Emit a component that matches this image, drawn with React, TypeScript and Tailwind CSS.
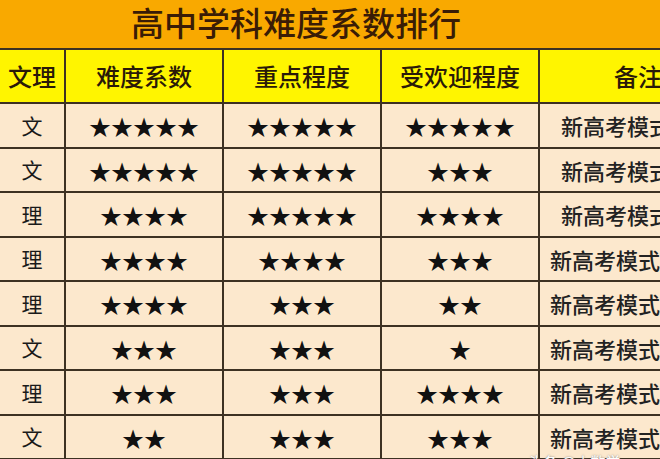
const LINE = "border-[#3d3122]";

type Row = { kind: string; hard: number; key: number; fav: number; note: string };

const ROWS: Row[] = [
  { kind: "文", hard: 5, key: 5, fav: 5, note: "新高考模式必考" },
  { kind: "文", hard: 5, key: 5, fav: 3, note: "新高考模式必考" },
  { kind: "理", hard: 4, key: 5, fav: 4, note: "新高考模式必考" },
  { kind: "理", hard: 4, key: 4, fav: 3, note: "新高考模式六选三" },
  { kind: "理", hard: 4, key: 3, fav: 2, note: "新高考模式六选三" },
  { kind: "文", hard: 3, key: 3, fav: 1, note: "新高考模式六选三" },
  { kind: "理", hard: 3, key: 3, fav: 4, note: "新高考模式六选三" },
  { kind: "文", hard: 2, key: 3, fav: 3, note: "新高考模式六选三" },
];

const HEADERS = ["文理", "难度系数", "重点程度", "受欢迎程度", "备注"];

function Stars({ n }: { n: number }) {
  return <span className="text-[22px] leading-none text-[#111]">{"★".repeat(n)}</span>;
}

function Cell({ children, head }: { children: React.ReactNode; head?: boolean }) {
  return (
    <div
      className={`flex items-center justify-center whitespace-nowrap border-r-2 border-b-2 ${LINE} ${
        head ? "h-[54px] bg-[#fff500]" : "h-[44.5px]"
      }`}
    >
      {children}
    </div>
  );
}

export default function App() {
  return (
    <div className="relative h-[459px] w-[660px] overflow-hidden bg-[#fce8cd] font-['Noto_Sans_CJK_SC','Noto_Sans',sans-serif]">
      <div className={`h-[50px] border-b-2 ${LINE} bg-[#f9a900] pl-[131px] pt-[4px]`}>
        <h1 className="whitespace-nowrap text-[33px] font-medium leading-[1.1] text-[#3a1c06]">
          高中学科难度系数排行
        </h1>
      </div>

      <div className="grid w-[738px] grid-cols-[66px_158px_158px_158px_198px]">
        {HEADERS.map((h) => (
          <Cell key={h} head>
            <span className="text-[24px] font-medium leading-none text-[#2a1a08]">{h}</span>
          </Cell>
        ))}
        {ROWS.map((r, i) => (
          <div key={i} className="contents">
            <Cell>
              <span className="text-[21px] leading-none text-[#1a1a1a]">{r.kind}</span>
            </Cell>
            <Cell>
              <Stars n={r.hard} />
            </Cell>
            <Cell>
              <Stars n={r.key} />
            </Cell>
            <Cell>
              <Stars n={r.fav} />
            </Cell>
            <Cell>
              <span className="text-[22px] font-medium leading-none text-[#222]">{r.note}</span>
            </Cell>
          </div>
        ))}
      </div>

      <span className="absolute left-[528px] top-[451px] whitespace-nowrap text-[15px] text-white [text-shadow:0_0_2px_#777]">
        头条 @小数学
      </span>
    </div>
  );
}
